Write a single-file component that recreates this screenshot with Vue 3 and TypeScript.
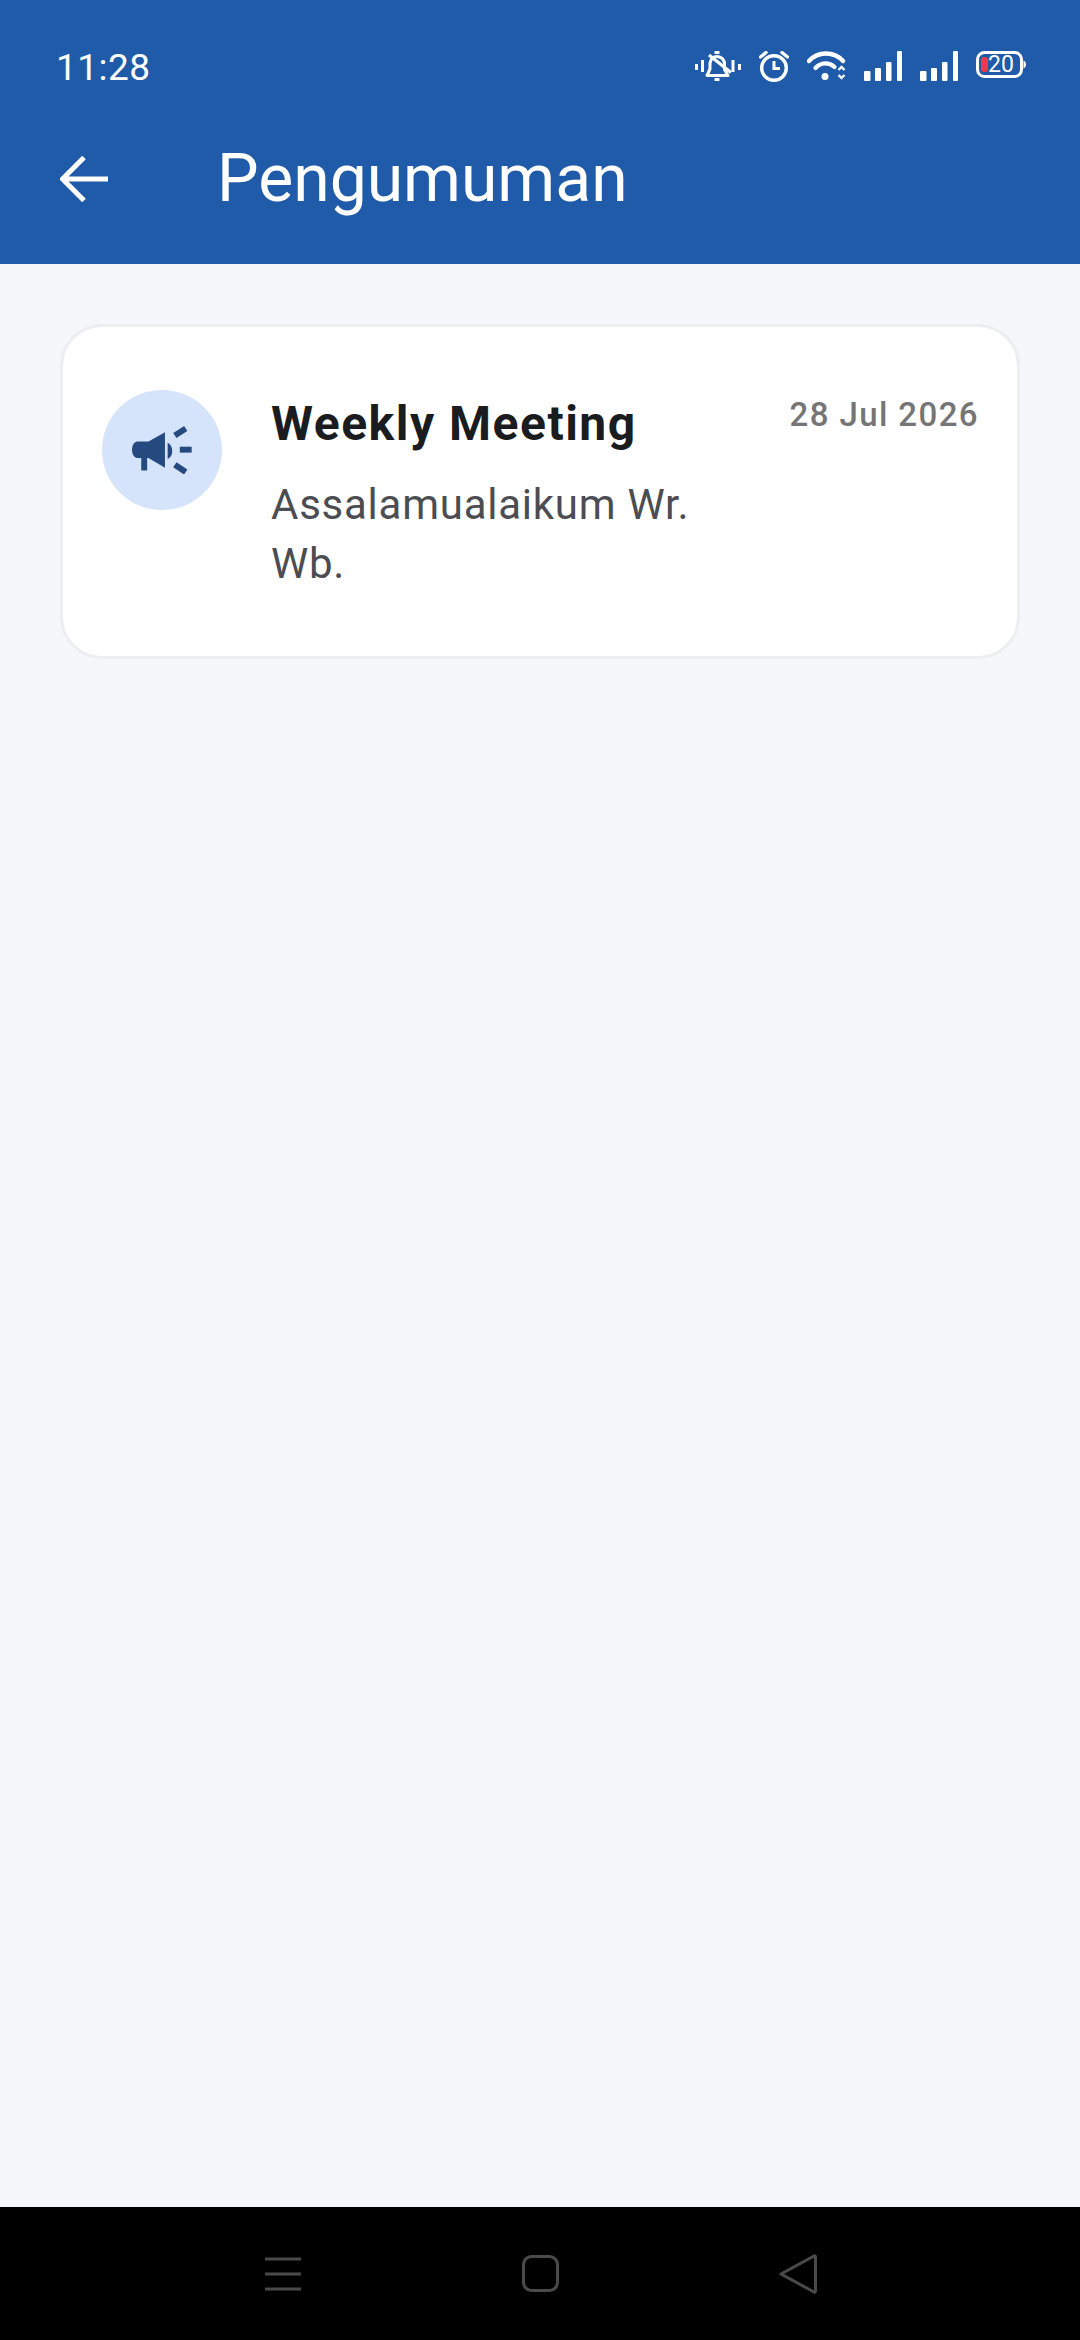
<script setup lang="ts">
// Pengumuman screen: one announcement card between the app bar and the system nav
const item = {
  title: 'Weekly Meeting',
  body: 'Assalamualaikum Wr. Wb.',
  date: '28 Jul 2026',
}
</script>

<template>
  <div class="page">
    <header class="head">
      <div class="status">
        <span class="time">11:28</span>
        <div class="status-icons">
          <svg width="46" height="30" viewBox="0 0 46 30" fill="none" stroke="#fff" stroke-width="3">
            <path d="M1.500 13v6M7.500 9v12M38 9v12M44.500 13v6" stroke-width="3" />
            <path d="M12 24.500h21l-3.500-6v-6a7.500 7.500 0 0 0-13-4.500L15 12v6z" stroke-linejoin="round" />
            <path d="M19.500 1.500h5" stroke-width="3" />
            <path d="M19.500 28.500h5" stroke-width="3" />
            <path d="M14 4l22 17.500" stroke-width="3.200" />
          </svg>
          <svg width="30" height="31" viewBox="0 0 30 31" fill="none" stroke="#fff" stroke-width="3.400">
            <circle cx="15" cy="17" r="12.300" />
            <path d="M15 10v7.500h6" stroke-width="3" />
            <path d="M1.500 6L7 1.500M28.500 6L23 1.500" stroke-linecap="round" />
          </svg>
          <svg width="39" height="29" viewBox="0 0 39 29" fill="none" stroke="#fff">
            <path d="M2 10C11 0 27 0 36 10" stroke-width="4.400" stroke-linecap="round" />
            <path d="M8.500 17c5.500-6 13.500-6 19-1" stroke-width="4.200" stroke-linecap="round" />
            <circle cx="18" cy="25.500" r="3.500" fill="#fff" stroke="none" />
            <path d="M31.500 19l3-3 3 3M31.500 24l3 3 3-3" stroke-width="2.400" />
          </svg>
          <svg v-for="n in 2" :key="n" width="38" height="30" viewBox="0 0 38 30" fill="#fff">
            <rect x="0" y="20" width="6.500" height="10" rx="1" />
            <rect x="11" y="17" width="6" height="13" rx="1" />
            <rect x="22" y="11" width="5.500" height="19" rx="1" />
            <rect x="33" y="0" width="5" height="30" rx="1" />
          </svg>
          <svg width="50" height="27" viewBox="0 0 50 27">
            <rect x="1.500" y="1.500" width="44" height="24" rx="7" fill="none" stroke="#fff" stroke-width="3" />
            <rect x="5" y="6" width="7" height="15" rx="3" fill="#ee3a4c" />
            <path d="M47.500 9.500c2 1 2.500 2.500 2.500 4s-.5 3-2.500 4z" fill="#fff" />
            <text x="12" y="21" class="batt">20</text>
          </svg>
        </div>
      </div>
      <div class="bar">
        <svg class="back" width="48" height="46" viewBox="0 0 48 46" fill="none" stroke="#fff" stroke-width="5">
          <path d="M48 23H3M24 1.500L2.500 23 24 44.500" />
        </svg>
        <h1 class="title">Pengumuman</h1>
      </div>
    </header>

    <main class="main">
      <article class="card">
        <div class="badge">
          <svg width="60" height="48" viewBox="0 0 182 144" fill="#254a80">
            <path d="M16 46h34l50-28v108L50 96H46v38H28V96H16C7 96 0 84 0 71s7-25 16-25z" />
            <path d="M108 50c9 4 14 13 14 25s-5 20-14 25z" />
            <path d="M130 28l33-21" stroke="#254a80" stroke-width="18" fill="none" />
            <path d="M145 71h36" stroke="#254a80" stroke-width="18" fill="none" />
            <path d="M130 117l33 22" stroke="#254a80" stroke-width="18" fill="none" />
          </svg>
        </div>
        <div class="text">
          <h2 class="item-title">{{ item.title }}</h2>
          <p class="item-body">{{ item.body }}</p>
        </div>
        <time class="date">{{ item.date }}</time>
      </article>
    </main>

    <nav class="sysnav">
      <svg width="38" height="36" viewBox="0 0 38 36" fill="none" stroke="#4a4a4a" stroke-width="3">
        <path d="M1 3h36M1 18h36M1 33h36" />
      </svg>
      <svg width="37" height="37" viewBox="0 0 37 37" fill="none" stroke="#4a4a4a" stroke-width="3">
        <rect x="1.500" y="1.500" width="34" height="34" rx="8" />
      </svg>
      <svg width="38" height="40" viewBox="0 0 38 40" fill="none" stroke="#4a4a4a" stroke-width="3" stroke-linejoin="round">
        <path d="M2 20L35 2c1-.5 1.500 0 1.500 1v34c0 1-.5 1.500-1.500 1z" />
      </svg>
    </nav>
  </div>
</template>

<style scoped>
.page {
  width: 1080px;
  height: 2340px;
  display: flex;
  flex-direction: column;
  background: #f5f7fb;
  font-family: Roboto, "Noto Sans", sans-serif;
}
.head {
  height: 264px;
  flex: none;
  background: #1f5ba8;
  color: #fff;
}
.status {
  height: 134px;
  padding: 51px 54px 0 56px;
  box-sizing: border-box;
  display: flex;
  justify-content: space-between;
  align-items: flex-start;
}
.time {
  font-size: 37px;
  line-height: 34px;
  letter-spacing: 0.5px;
}
.status-icons {
  display: flex;
  align-items: flex-start;
  gap: 18px;
}
.batt {
  font-size: 23px;
  fill: #fff;
  font-family: Roboto, sans-serif;
}
.bar {
  display: flex;
  align-items: center;
  padding-left: 60px;
  gap: 109px;
  height: 90px;
}
.title {
  margin: 0;
  font-size: 66px;
  line-height: 78px;
  font-weight: 400;
}
.main {
  flex: 1;
  padding: 60px 60px 0;
}
.card {
  display: flex;
  align-items: flex-start;
  padding: 63px 38px 0 39px;
  height: 335px;
  box-sizing: border-box;
  background: #fff;
  border: 3px solid #eceef1;
  border-radius: 42px;
}
.badge {
  width: 120px;
  height: 120px;
  flex: none;
  border-radius: 50%;
  background: #d6e4fb;
  display: flex;
  align-items: center;
  justify-content: center;
  margin-right: 49px;
}
.text {
  flex: 1;
  min-width: 0;
}
.item-title {
  margin: 6px 0 0;
  font-size: 48px;
  line-height: 56px;
  font-weight: 700;
  letter-spacing: 1.5px;
  color: #1a1c20;
}
.item-body {
  margin: 23px 0 0;
  font-size: 42px;
  line-height: 59px;
  letter-spacing: 0.75px;
  color: #4b4d52;
}
.date {
  margin: 5px 0 0 24px;
  flex: none;
  font-size: 33px;
  line-height: 40px;
  font-weight: 500;
  letter-spacing: 1.4px;
  color: #757575;
}
.sysnav {
  height: 133px;
  flex: none;
  background: #000;
  display: flex;
  align-items: center;
  justify-content: center;
  gap: 220px;
}
</style>

<style>
html,
body {
  margin: 0;
  padding: 0;
}
</style>
